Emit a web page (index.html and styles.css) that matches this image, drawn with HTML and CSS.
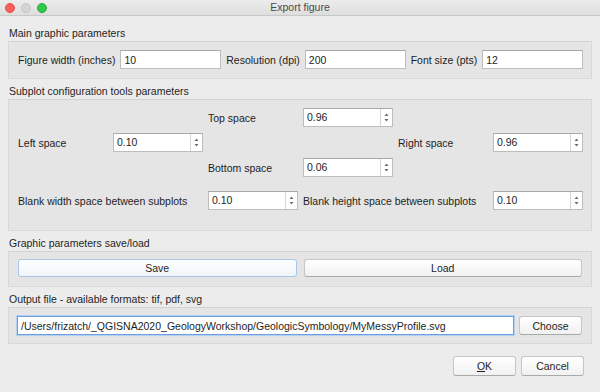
FILE: index.html
```html
<!DOCTYPE html>
<html lang="en">
<head>
<meta charset="UTF-8">
<title>Export figure</title>
<link rel="stylesheet" href="styles.css">
</head>
<body>

<div class="window">

  <div class="titlebar">
    <div class="lights">
      <span class="light red"></span>
      <span class="light grey"></span>
      <span class="light green"></span>
    </div>
    <div class="title">Export figure</div>
  </div>

  <div class="content">

    <div class="legend first">Main graphic parameters</div>
    <div class="group main-params">
      <label>Figure width (inches)</label>
      <input class="field" type="text" value="10">
      <label>Resolution (dpi)</label>
      <input class="field" type="text" value="200">
      <label>Font size (pts)</label>
      <input class="field" type="text" value="12">
    </div>

    <div class="legend">Subplot configuration tools parameters</div>
    <div class="group subplot-params">
      <label class="c3 r1">Top space</label>
      <div class="spin c4 r1">
        <span>0.96</span>
        <svg class="stepper" width="11" height="17" viewBox="0 0 11 17"><path d="M3.5 7 L5.5 4.5 L7.5 7 Z M3.5 10 L5.5 12.5 L7.5 10 Z" fill="#6e6e6e"/></svg>
      </div>

      <label class="c1 r2">Left space</label>
      <div class="spin c2 r2">
        <span>0.10</span>
        <svg class="stepper" width="11" height="17" viewBox="0 0 11 17"><path d="M3.5 7 L5.5 4.5 L7.5 7 Z M3.5 10 L5.5 12.5 L7.5 10 Z" fill="#6e6e6e"/></svg>
      </div>
      <label class="c5 r2">Right space</label>
      <div class="spin c6 r2">
        <span>0.96</span>
        <svg class="stepper" width="11" height="17" viewBox="0 0 11 17"><path d="M3.5 7 L5.5 4.5 L7.5 7 Z M3.5 10 L5.5 12.5 L7.5 10 Z" fill="#6e6e6e"/></svg>
      </div>

      <label class="c3 r3">Bottom space</label>
      <div class="spin c4 r3">
        <span>0.06</span>
        <svg class="stepper" width="11" height="17" viewBox="0 0 11 17"><path d="M3.5 7 L5.5 4.5 L7.5 7 Z M3.5 10 L5.5 12.5 L7.5 10 Z" fill="#6e6e6e"/></svg>
      </div>

      <label class="c1 wide r4">Blank width space between subplots</label>
      <div class="spin c3 r4">
        <span>0.10</span>
        <svg class="stepper" width="11" height="17" viewBox="0 0 11 17"><path d="M3.5 7 L5.5 4.5 L7.5 7 Z M3.5 10 L5.5 12.5 L7.5 10 Z" fill="#6e6e6e"/></svg>
      </div>
      <label class="c4 wide r4">Blank height space between subplots</label>
      <div class="spin c6 r4">
        <span>0.10</span>
        <svg class="stepper" width="11" height="17" viewBox="0 0 11 17"><path d="M3.5 7 L5.5 4.5 L7.5 7 Z M3.5 10 L5.5 12.5 L7.5 10 Z" fill="#6e6e6e"/></svg>
      </div>
    </div>

    <div class="legend">Graphic parameters save/load</div>
    <div class="group save-load">
      <button class="btn focused">Save</button>
      <button class="btn">Load</button>
    </div>

    <div class="legend">Output file - available formats: tif, pdf, svg</div>
    <div class="group output">
      <input class="field path" type="text" value="/Users/frizatch/_QGISNA2020_GeologyWorkshop/GeologicSymbology/MyMessyProfile.svg">
      <button class="btn choose">Choose</button>
    </div>

    <div class="dialog-buttons">
      <button class="btn"><u>O</u>K</button>
      <button class="btn">Cancel</button>
    </div>

  </div>
</div>

</body>
</html>
```

FILE: styles.css
```css
body {
  margin: 0;
  font-family: "Liberation Sans", Arial, sans-serif;
  font-size: 10.5px;
  color: #1e1e1e;
  background-color: #ececec;
}

.window {
  width: 600px;
  height: 392px;
  background-color: #ececec;
  overflow: hidden;
}

/* title bar */
.titlebar {
  display: grid;
  grid-template-columns: 1fr auto 1fr;
  align-items: center;
  height: 15px;
  border-bottom: 1px solid #c8c8c8;
  background: linear-gradient(#ececec, #dedede);
}

.lights {
  display: flex;
  gap: 6px;
  padding-left: 5px;
}

.light {
  width: 10px;
  height: 10px;
  border-radius: 50%;
  box-sizing: border-box;
}

.red { background-color: #fc605c; border: 1px solid #e4493f; }
.grey { background-color: #d4d4d4; border: 1px solid #c4c4c4; }
.green { background-color: #34c84a; border: 1px solid #25a83a; }

.title {
  color: #4a4a4a;
  line-height: 15px;
}

/* body */
.content {
  padding: 10px 8px 0 8px;
}

.legend {
  height: 15px;
  line-height: 15px;
  padding-left: 1px;
  margin-top: 5px;
}

.legend.first {
  margin-top: 0;
}

.group {
  background-color: #e5e5e5;
  border: 1px solid #d9d9d9;
  border-top-color: #d2d2d2;
}

label {
  white-space: nowrap;
}

.field {
  height: 19px;
  box-sizing: border-box;
  border: 1px solid #bdbdbd;
  border-top-color: #a9a9a9;
  background-color: #fff;
  font-family: inherit;
  font-size: 10.5px;
  color: #1e1e1e;
  padding: 0 3px;
  margin: 0;
  min-width: 0;
  outline: none;
}

.main-params {
  display: grid;
  grid-template-columns: auto 1fr auto 1fr auto 1fr;
  align-items: center;
  column-gap: 5px;
  padding: 8px 8px 9px 9px;
}

/* subplot grid */
.subplot-params {
  display: grid;
  grid-template-columns: repeat(6, 1fr);
  grid-template-rows: 19px 19px 19px 2px 19px;
  column-gap: 5px;
  row-gap: 6px;
  align-items: center;
  padding: 8px 8px 20px 9px;
}

.c1 { grid-column: 1; }
.c2 { grid-column: 2; }
.c3 { grid-column: 3; }
.c4 { grid-column: 4; }
.c5 { grid-column: 5; }
.c6 { grid-column: 6; }
.c1.wide { grid-column: 1 / 3; }
.c4.wide { grid-column: 4 / 6; }
.r1 { grid-row: 1; }
.r2 { grid-row: 2; }
.r3 { grid-row: 3; }
.r4 { grid-row: 5; }

.spin {
  display: flex;
  height: 19px;
  box-sizing: border-box;
  border: 1px solid #bdbdbd;
  border-top-color: #a9a9a9;
  background-color: #fff;
}

.spin span {
  flex: 1;
  line-height: 17px;
  padding-left: 3px;
}

.stepper {
  display: block;
  flex: none;
  border-left: 1px solid #d6d6d6;
}

/* buttons */
.btn {
  height: 18px;
  box-sizing: border-box;
  padding: 0 6px;
  margin: 0;
  border: 1px solid #c6c6c6;
  border-bottom-color: #a9a9a9;
  border-radius: 3px;
  background: linear-gradient(#ffffff, #f1f1f1);
  font-family: inherit;
  font-size: 10.5px;
  color: #1e1e1e;
}

.save-load {
  display: grid;
  grid-template-columns: 1fr 1fr;
  column-gap: 7px;
  padding: 7px 9px 9px 9px;
}

.btn.focused {
  border-color: #a9c5ea;
  background: linear-gradient(#fdfeff, #f0f4fa);
}

.output {
  display: flex;
  gap: 5px;
  align-items: center;
  padding: 8px 9px 8px 8px;
}

.path {
  flex: 1;
  border: 1px solid #6d9fe0;
  box-shadow: 0 0 0 1px #b3cff2;
}

.choose {
  width: 63px;
  height: 19px;
}

.dialog-buttons {
  display: flex;
  justify-content: flex-end;
  gap: 5px;
  margin-top: 12px;
  margin-right: -8px;
  padding-right: 16px;
}

.dialog-buttons .btn {
  width: 63px;
  height: 20px;
}
```
